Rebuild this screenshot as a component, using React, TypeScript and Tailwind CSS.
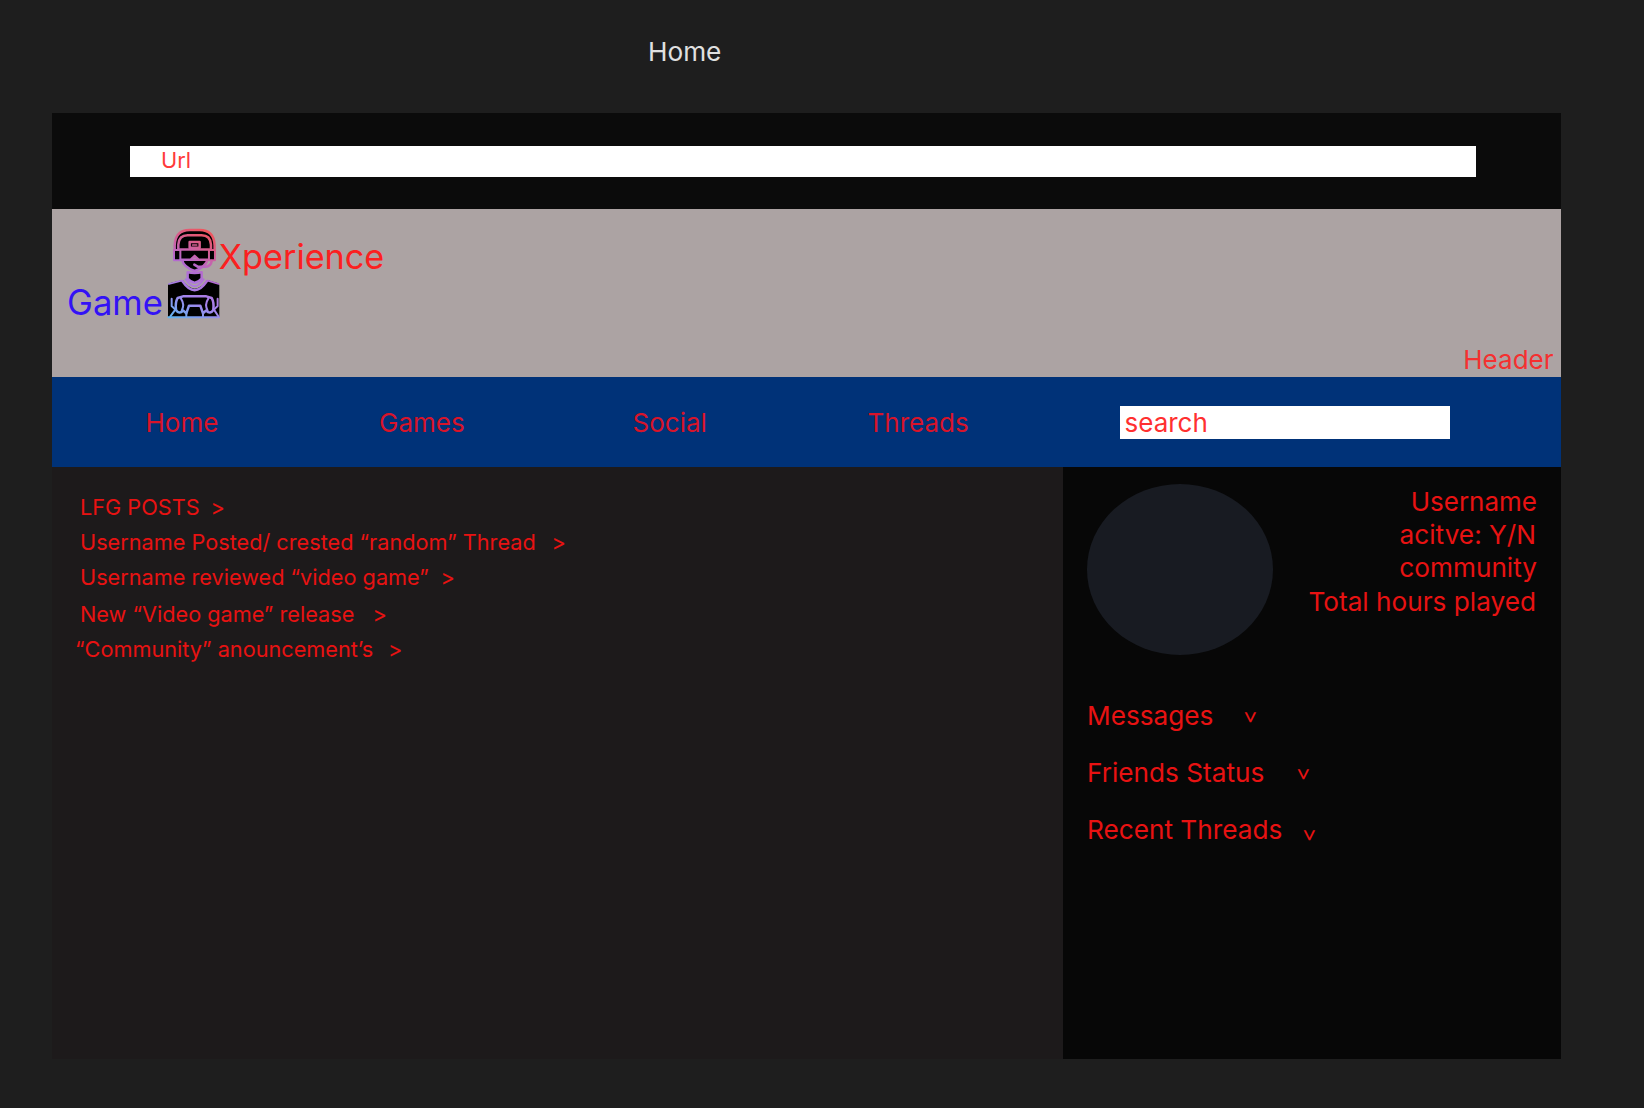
import type { ReactNode } from "react";

function GamerIcon({ className }: { className: string }) {
  return (
    <svg viewBox="50 38 160 273" className={className} fill="none" aria-hidden="true">
      <defs>
        <linearGradient id="gamer" gradientUnits="userSpaceOnUse" x1="60" y1="305" x2="185" y2="55">
          <stop offset="0" stopColor="#62b4f0" />
          <stop offset="0.28" stopColor="#a583ec" />
          <stop offset="0.6" stopColor="#b568cc" />
          <stop offset="1" stopColor="#f0555c" />
        </linearGradient>
      </defs>
      <g fill="#000" stroke="url(#gamer)" strokeWidth="7.5" strokeLinejoin="round" strokeLinecap="round">
        <path d="M53 305V210Q53 205 60 203L97 194Q133 246 170 194L201 203Q207 205 207 210V305Z" stroke="none" />
        <path d="M73 103V90Q75 44 118 44H148Q191 44 193 90V103" />
        <path d="M84 103V88Q86 60 112 60H154Q180 60 182 88V103Z" />
        <path d="M95 133Q100 155 133 167Q166 155 172 133Z" />
        <path d="M89 103H177V133H146L133 121L120 133H89Z" strokeWidth="6.5" />
        <path d="M118 80H148V97H118Z" />
        <path d="M127 89H139" strokeWidth="5" />
        <path d="M71 104H90V135H71Z" strokeWidth="6" />
        <path d="M176 104H194V135H176Z" strokeWidth="6" />
        <path d="M184 137Q182 153 166 154H142L132 148" fill="none" />
        <path d="M112 171V190Q133 214 154 190V171Q133 175 112 171Z" />
        <path d="M96 197Q133 252 170 197" fill="none" />
        <path d="M106 192Q133 234 160 192" fill="none" strokeWidth="6" />
        <path d="M56 206L94 196M205 206L172 196" fill="none" strokeWidth="5" />
        <path d="M54 306H206" strokeWidth="6" />
        <path d="M98 243H168L184 248Q192 262 189 284Q180 298 167 286L158 294L150 271H116L108 294L99 286Q86 298 77 284Q74 262 82 248Z" />
        <path d="M92 250Q104 268 94 286M174 250Q162 268 172 286" fill="none" strokeWidth="6" />
        <path d="M64 250V272L75 283L60 303M202 250V272L191 283L204 303M108 294V303M158 294V303" fill="none" strokeWidth="6" />
      </g>
    </svg>
  );
}

const feed = [
  { text: "LFG POSTS", row: "h-[35px] pl-[28px]", gap: "left-[158.5px]" },
  { text: "Username Posted/ crested “random” Thread", row: "h-[35px] pl-[28px]", gap: "left-[499.5px]" },
  { text: "Username reviewed “video game”", row: "h-[37px] pl-[28px]", gap: "left-[388.5px]" },
  { text: "New “Video game” release", row: "h-[35px] pl-[28px]", gap: "left-[320.5px]" },
  { text: "“Community” anouncement’s", row: "h-[34px] pl-[23px]", gap: "left-[336px]" },
];

const panels = [
  { text: "Messages", row: "h-[57px]", arrow: "left-[158px] -top-px" },
  { text: "Friends Status", row: "h-[57px]", arrow: "left-[211px] -top-px" },
  { text: "Recent Threads", row: "h-[57px]", arrow: "left-[217px] top-[3px]" },
];

function NavLink({ children, className }: { children: ReactNode; className: string }) {
  return <a className={`block shrink-0 pt-[2px] text-[26px] leading-[40px] ${className}`}>{children}</a>;
}

export default function App() {
  return (
    <div className="h-[1108px] w-[1644px] overflow-hidden whitespace-nowrap bg-[#1e1e1e] font-['Inter',sans-serif] text-[#e81212]">
      <div className="h-[113px] pl-[648px] text-[26.2px] leading-[104px] text-[#e0e0e0]">Home</div>

      <div className="ml-[52px] flex h-[945.5px] w-[1509px] flex-col">
        <div className="h-[96px] shrink-0 bg-[#0b0b0b] pl-[78px] pt-[32.5px]">
          <div className="h-[31px] w-[1346px] bg-white pl-[31px] text-[21.8px] leading-[28px] text-[#ff3a3a]">Url</div>
        </div>

        <header className="flex h-[168px] shrink-0 justify-between bg-[#aca3a3] pl-[15px] pr-[7.5px]">
          <div className="flex leading-[42px]">
            <span className="w-[99.5px] pt-[72px] text-[34.7px] text-[#3312f5]">Game</span>
            <GamerIcon className="mt-[18.5px] h-[91px] w-[53.3px] shrink-0" />
            <span className="-ml-px pt-[27px] text-[34.2px] text-[#fb2020]">Xperience</span>
          </div>
          <span className="self-end pb-[2px] text-[26px] leading-[31px] text-[#f53030]">Header</span>
        </header>

        <nav className="flex h-[90px] shrink-0 items-center bg-[#003278] text-[#d8142a]">
          <NavLink className="ml-[93.5px] w-[233.5px]">Home</NavLink>
          <NavLink className="w-[253.5px]">Games</NavLink>
          <NavLink className="w-[235px]">Social</NavLink>
          <NavLink className="w-[252.5px]">Threads</NavLink>
          <div className="h-[33px] w-[330px] bg-white pl-[4.5px] text-[26px] leading-[34px] text-[#ff3030]">search</div>
        </nav>

        <div className="flex min-h-0 flex-1">
          <main className="w-[1011px] bg-[#1d1a1b] pt-[23px] text-[21.7px]">
            {feed.map((f) => (
              <div key={f.text} className={`relative leading-[35px] ${f.row}`}>
                {f.text}
                <span className={`absolute top-0 ${f.gap}`}>&gt;</span>
              </div>
            ))}
          </main>

          <aside className="flex-1 bg-[#070707] pl-[24px] pr-[25px] text-[26.2px]">
            <div className="flex h-[222px] justify-between pt-[17px]">
              <div className="h-[171px] w-[186px] rounded-[50%] bg-[#181b22]" />
              <div className="pt-px text-right leading-[33px]">
                <p className="-mr-px text-[26px]">Username</p>
                <p>acitve: Y/N</p>
                <p className="-mr-px">community</p>
                <p className="pt-px">Total hours played</p>
              </div>
            </div>
            {panels.map((p) => (
              <div key={p.text} className={`relative leading-[54px] ${p.row}`}>
                {p.text}
                <span className={`absolute flex h-[57px] items-center ${p.arrow}`}>
                  <span className="rotate-90 text-[21.7px] leading-[20px]">&gt;</span>
                </span>
              </div>
            ))}
          </aside>
        </div>
      </div>
    </div>
  );
}
